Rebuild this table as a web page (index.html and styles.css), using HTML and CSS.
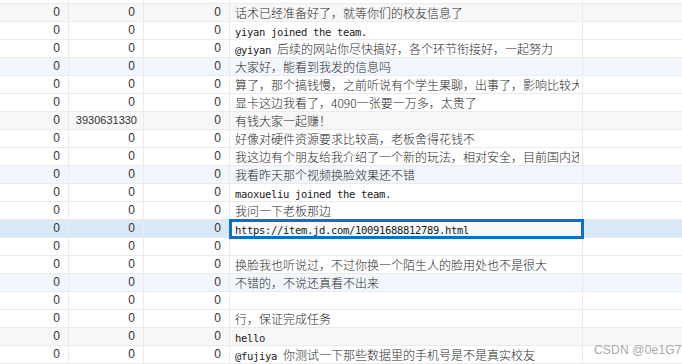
FILE: index.html
```html
<!DOCTYPE html>
<html lang="zh">
<head>
<meta charset="utf-8">
<title>Grid</title>
<link rel="stylesheet" href="styles.css">
</head>
<body>
<div class="grid">
  <div class="row cut"><div class="c n"></div><div class="c n"></div><div class="c n"></div><div class="c t"></div><div class="c e"></div></div>
  <div class="row g"><div class="c n">0</div><div class="c n">0</div><div class="c n">0</div><div class="c t"><span class="tx">话术已经准备好了，就等你们的校友信息了</span></div><div class="c e"></div></div>
  <div class="row"><div class="c n">0</div><div class="c n">0</div><div class="c n">0</div><div class="c t"><span class="tx"><span class="en">yiyan joined the team.</span></span></div><div class="c e"></div></div>
  <div class="row"><div class="c n">0</div><div class="c n">0</div><div class="c n">0</div><div class="c t"><span class="tx"><span class="en">@yiyan </span>后续的网站你尽快搞好，各个环节衔接好，一起努力</span></div><div class="c e"></div></div>
  <div class="row h"><div class="c n">0</div><div class="c n">0</div><div class="c n">0</div><div class="c t"><span class="tx">大家好，能看到我发的信息吗</span></div><div class="c e"></div></div>
  <div class="row"><div class="c n">0</div><div class="c n">0</div><div class="c n">0</div><div class="c t"><span class="tx">算了，那个搞钱慢，之前听说有个学生果聊，出事了，影响比较大</span></div><div class="c e"></div></div>
  <div class="row"><div class="c n">0</div><div class="c n">0</div><div class="c n">0</div><div class="c t"><span class="tx">显卡这边我看了，4090一张要一万多，太贵了</span></div><div class="c e"></div></div>
  <div class="row g"><div class="c n">0</div><div class="c n big">3930631330</div><div class="c n">0</div><div class="c t"><span class="tx">有钱大家一起赚！</span></div><div class="c e"></div></div>
  <div class="row"><div class="c n">0</div><div class="c n">0</div><div class="c n">0</div><div class="c t"><span class="tx">好像对硬件资源要求比较高，老板舍得花钱不</span></div><div class="c e"></div></div>
  <div class="row"><div class="c n">0</div><div class="c n">0</div><div class="c n">0</div><div class="c t"><span class="tx">我这边有个朋友给我介绍了一个新的玩法，相对安全，目前国内还没有</span></div><div class="c e"></div></div>
  <div class="row h"><div class="c n">0</div><div class="c n">0</div><div class="c n">0</div><div class="c t"><span class="tx">我看昨天那个视频换脸效果还不错</span></div><div class="c e"></div></div>
  <div class="row"><div class="c n">0</div><div class="c n">0</div><div class="c n">0</div><div class="c t"><span class="tx"><span class="en">maoxueliu joined the team.</span></span></div><div class="c e"></div></div>
  <div class="row"><div class="c n">0</div><div class="c n">0</div><div class="c n">0</div><div class="c t"><span class="tx">我问一下老板那边</span></div><div class="c e"></div></div>
  <div class="row sel"><div class="c n">0</div><div class="c n">0</div><div class="c n">0</div><div class="c t active"><span class="tx"><span class="en">https://item.jd.com/10091688812789.html</span></span></div><div class="c e"></div></div>
  <div class="row"><div class="c n">0</div><div class="c n">0</div><div class="c n">0</div><div class="c t"></div><div class="c e"></div></div>
  <div class="row"><div class="c n">0</div><div class="c n">0</div><div class="c n">0</div><div class="c t"><span class="tx">换脸我也听说过，不过你换一个陌生人的脸用处也不是很大</span></div><div class="c e"></div></div>
  <div class="row h"><div class="c n">0</div><div class="c n">0</div><div class="c n">0</div><div class="c t"><span class="tx">不错的，不说还真看不出来</span></div><div class="c e"></div></div>
  <div class="row"><div class="c n">0</div><div class="c n">0</div><div class="c n">0</div><div class="c t"></div><div class="c e"></div></div>
  <div class="row"><div class="c n">0</div><div class="c n">0</div><div class="c n">0</div><div class="c t"><span class="tx">行，保证完成任务</span></div><div class="c e"></div></div>
  <div class="row g"><div class="c n">0</div><div class="c n">0</div><div class="c n">0</div><div class="c t"><span class="tx"><span class="en">hello</span></span></div><div class="c e"></div></div>
  <div class="row"><div class="c n">0</div><div class="c n">0</div><div class="c n">0</div><div class="c t"><span class="tx"><span class="en">@fujiya </span>你测试一下那些数据里的手机号是不是真实校友</span></div><div class="c e"></div></div>
</div>
<div class="watermark">CSDN @0e1G7</div>
</body>
</html>
```
FILE: styles.css
```css
html, body {
  margin: 0;
  padding: 0;
  background: #ffffff;
  overflow: hidden;
}
body {
  width: 682px;
  height: 364px;
  position: relative;
}
.grid {
  display: flex;
  flex-direction: column;
}
.row {
  display: grid;
  grid-template-columns: 69px 75px 86px 353px 1fr;
  height: 18px;
  background: #ffffff;
}
.row.cut { height: 4px; }
.row.g { background: #f7f7f7; }
.row.h { background: #f2f7fd; }
.row.sel { background: #dae9f8; }
.c {
  box-sizing: border-box;
  border-right: 1px solid #ebebeb;
  border-bottom: 1px solid #ebebeb;
  height: 100%;
  line-height: 17px;
  overflow: hidden;
  white-space: nowrap;
}
.c.e { border-right: none; }
.n {
  font-family: "Liberation Sans", Arial, sans-serif;
  font-size: 12px;
  color: #333333;
  text-align: right;
  padding-right: 8px;
}
.n.big {
  font-size: 11px;
  padding-right: 6px;
}
.t {
  display: flex;
  font-family: "Noto Sans CJK SC", "Liberation Sans", sans-serif;
  font-size: 12px;
  font-weight: 300;
  color: #2a2a2a;
  padding-left: 5px;
}
.tx {
  display: block;
  flex: 1 1 auto;
  min-width: 0;
  margin-right: 3px;
  overflow: hidden;
  white-space: nowrap;
}
.en {
  font-family: "DejaVu Sans Mono", monospace;
  font-weight: 400;
  font-size: 10.5px;
  letter-spacing: -0.32px;
  color: #1a1a1a;
  white-space: pre;
}
.active {
  background: #f8f8f8;
  outline: 3px solid #0b6fd0;
  outline-offset: -2px;
  position: relative;
  z-index: 1;
}
.watermark {
  position: absolute;
  left: 594px;
  top: 343px;
  font-family: "Liberation Sans", Arial, sans-serif;
  font-size: 12px;
  color: #a8a8a8;
  letter-spacing: 0.2px;
}
```
